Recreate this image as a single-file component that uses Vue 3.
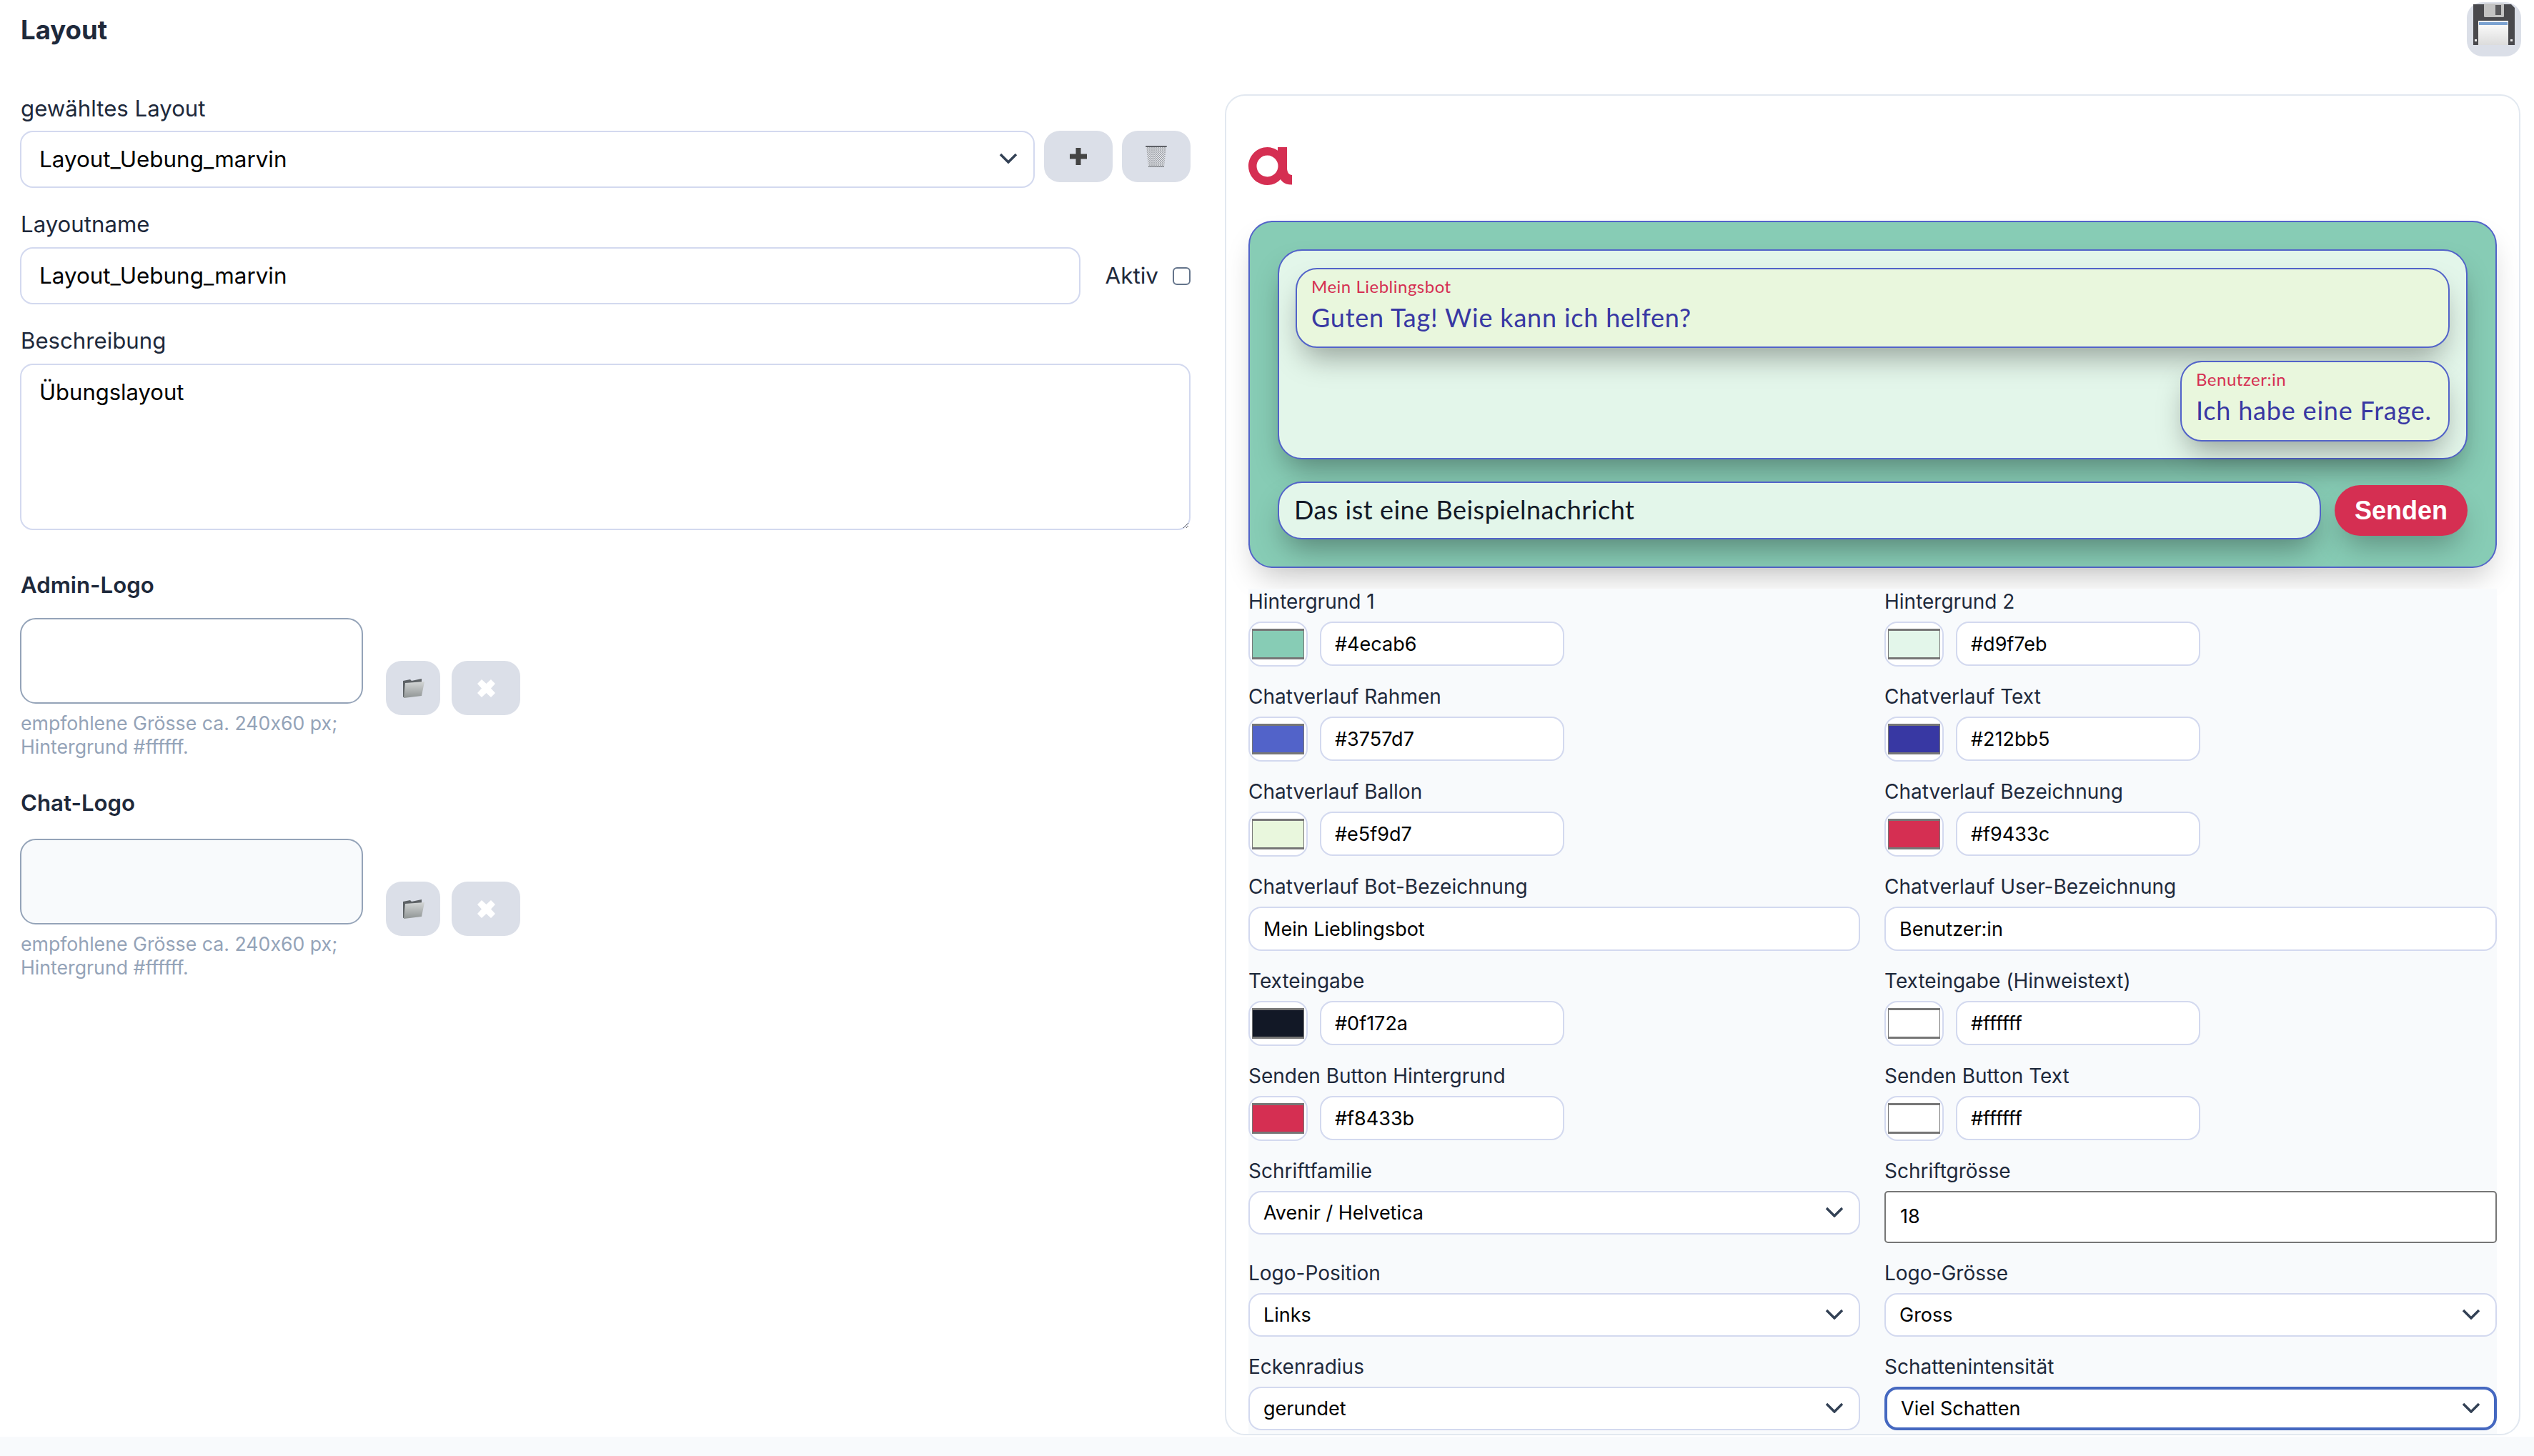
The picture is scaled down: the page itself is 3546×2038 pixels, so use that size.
<script setup>
const leftLogos = [
  { name: 'Admin-Logo', cls: 'admin-logo' },
  { name: 'Chat-Logo', cls: 'chat-logo' },
];
const rows = [
  { type: 'color', label: 'Hintergrund 1', value: '#4ecab6', color: '#87ccb5' },
  { type: 'color', label: 'Hintergrund 2', value: '#d9f7eb', color: '#e3f6ea' },
  { type: 'color', label: 'Chatverlauf Rahmen', value: '#3757d7', color: '#5263c9' },
  { type: 'color', label: 'Chatverlauf Text', value: '#212bb5', color: '#3838a3' },
  { type: 'color', label: 'Chatverlauf Ballon', value: '#e5f9d7', color: '#e9f7dd' },
  { type: 'color', label: 'Chatverlauf Bezeichnung', value: '#f9433c', color: '#d52f52' },
  { type: 'text', label: 'Chatverlauf Bot-Bezeichnung', value: 'Mein Lieblingsbot' },
  { type: 'text', label: 'Chatverlauf User-Bezeichnung', value: 'Benutzer:in' },
  { type: 'color', label: 'Texteingabe', value: '#0f172a', color: '#121826' },
  { type: 'color', label: 'Texteingabe (Hinweistext)', value: '#ffffff', color: '#ffffff' },
  { type: 'color', label: 'Senden Button Hintergrund', value: '#f8433b', color: '#d52f52' },
  { type: 'color', label: 'Senden Button Text', value: '#ffffff', color: '#ffffff' },
  { type: 'select', label: 'Schriftfamilie', value: 'Avenir / Helvetica' },
  { type: 'number', label: 'Schriftgrösse', value: '18' },
  { type: 'select', label: 'Logo-Position', value: 'Links' },
  { type: 'select', label: 'Logo-Grösse', value: 'Gross' },
  { type: 'select', label: 'Eckenradius', value: 'gerundet' },
  { type: 'select', label: 'Schattenintensität', value: 'Viel Schatten', focus: true },
];
</script>

<template>
  <div class="page">
    <div class="sheet">
      <header class="header">
        <h1 class="title">Layout</h1>
        <button class="btn save" aria-label="Speichern">
          <svg width="58" height="58" viewBox="0 0 58 58">
            <defs>
              <linearGradient id="lab" x1="0" y1="0" x2="0" y2="1">
                <stop offset="0" stop-color="#ffffff" />
                <stop offset="1" stop-color="#dcdcdc" />
              </linearGradient>
            </defs>
            <path d="M0 1h53l5 5v52H0z" fill="#49494d" />
            <rect x="15" y="0" width="28" height="19" rx="1.5" fill="#c2c2c2" />
            <rect x="31" y="2" width="8" height="14" fill="#59595c" />
            <rect x="7" y="24" width="42" height="34" fill="url(#lab)" />
            <rect x="8" y="26" width="40" height="4" fill="#7ba2d1" />
            <rect x="2" y="50" width="3" height="3" fill="#eee" />
            <rect x="52" y="50" width="3" height="3" fill="#eee" />
          </svg>
        </button>
      </header>

      <main class="columns">
        <section class="left">
          <label class="label first">gewähltes Layout</label>
          <div class="layout-row">
            <div class="select-wrap grow">
              <select class="field big">
                <option>Layout_Uebung_marvin</option>
              </select>
              <svg class="chev" width="26" height="15" viewBox="0 0 26 15"><path d="M2 2l11 11L24 2" /></svg>
            </div>
            <button class="btn action" aria-label="Neu">
              <svg width="24" height="24" viewBox="0 0 24 24"><path d="M8.500 0h7v8.500H24v7h-8.500V24h-7v-8.500H0v-7h8.500z" fill="#444" /></svg>
            </button>
            <button class="btn action" aria-label="Löschen">
              <svg width="30" height="30" viewBox="0 0 30 30">
                <defs>
                  <pattern id="mesh" width="3" height="3" patternUnits="userSpaceOnUse">
                    <path d="M0 0l3 3M3 0L0 3" stroke="#7d8187" stroke-width=".55" />
                  </pattern>
                </defs>
                <path d="M1 2h28l-3 27H4z" fill="#e2e4e8" />
                <path d="M1 2h28l-3 27H4z" fill="url(#mesh)" />
                <rect x="0" y="0" width="30" height="2" rx="1" fill="#5d6066" />
                <rect x="4" y="28.500" width="22" height="1.500" fill="#8a8d93" />
              </svg>
            </button>
          </div>

          <label class="label">Layoutname</label>
          <div class="name-row">
            <input class="field big grow" type="text" value="Layout_Uebung_marvin" />
            <span class="aktiv">Aktiv</span>
            <span class="check"></span>
          </div>

          <label class="label">Beschreibung</label>
          <textarea class="field area">Übungslayout</textarea>

          <div v-for="l in leftLogos" :key="l.name" class="logo-block" :class="l.cls">
            <h2 class="logo-title">{{ l.name }}</h2>
            <div class="logo-row">
              <div class="logo-main">
                <div class="logo-box"></div>
                <p class="hint">empfohlene Grösse ca. 240x60 px;<br />Hintergrund #ffffff.</p>
              </div>
              <button class="btn small" aria-label="Öffnen">
                <svg width="31" height="29" viewBox="0 0 31 29">
                  <defs>
                    <linearGradient id="fold" x1="0" y1="0" x2="0" y2="1">
                      <stop offset="0" stop-color="#d3d6d6" />
                      <stop offset="1" stop-color="#8f9494" />
                    </linearGradient>
                  </defs>
                  <path d="M1 4l10-2 2 2 14-3v18L1 27z" fill="#5d6266" />
                  <path d="M4 7l27-2-4 20L2 28z" fill="url(#fold)" />
                </svg>
              </button>
              <button class="btn action x" aria-label="Entfernen">
                <svg width="25" height="25" viewBox="0 0 25 25"><path d="M6 0l6.500 6L19 0l6 6-6 6.500 6 6.500-6 6-6.500-6L6 25l-6-6 6-6.500L0 6z" fill="#fff" /></svg>
              </button>
            </div>
          </div>
        </section>

        <section class="card">
          <div class="brand">
            <svg width="61" height="53" viewBox="0 0 61 53">
              <path fill-rule="evenodd" fill="#d52f52" d="M26.500 0C32 0 37 1.700 41 4.700V0h13v29c0 6.500 3 10 7 10v13.500c-8 0-13-2.500-16-7.500-4.500 5-11 8-18.500 8C12 53 0 41 0 26.500S12 0 26.500 0zm0 11.500a15 15 0 1 0 0 30 15 15 0 0 0 0-30z" />
            </svg>
          </div>

          <div class="preview">
            <div class="chat">
              <div class="balloon bot">
                <div class="who">Mein Lieblingsbot</div>
                <div class="say">Guten Tag! Wie kann ich helfen?</div>
              </div>
              <div class="balloon user">
                <div class="who">Benutzer:in</div>
                <div class="say">Ich habe eine Frage.</div>
              </div>
            </div>
            <div class="entry">
              <div class="entry-field">Das ist eine Beispielnachricht</div>
              <button class="send">Senden</button>
            </div>
          </div>

          <div class="form">
            <div v-for="r in rows" :key="r.label" class="cell">
              <label class="flabel">{{ r.label }}</label>
              <div v-if="r.type === 'color'" class="color-row">
                <span class="swatch"><span class="chip" :style="{ background: r.color }"></span></span>
                <input class="field small-field hex" type="text" :value="r.value" />
              </div>
              <input v-else-if="r.type === 'text'" class="field small-field" type="text" :value="r.value" />
              <input v-else-if="r.type === 'number'" class="number" type="number" :value="r.value" />
              <div v-else class="select-wrap">
                <select class="field small-field sel" :class="{ focus: r.focus }">
                  <option>{{ r.value }}</option>
                </select>
                <svg class="chev small-chev" width="26" height="15" viewBox="0 0 26 15"><path d="M2 2l11 11L24 2" /></svg>
              </div>
            </div>
          </div>
        </section>
      </main>
    </div>
  </div>
</template>

<style>
html, body { margin: 0; background: #f8fafc; }
</style>

<style scoped>
* { box-sizing: border-box; font-feature-settings: "calt" 0; }
.page {
  width: 3546px;
  height: 2038px;
  background: #f8fafc;
  font-family: Inter, "Liberation Sans", sans-serif;
  color: #1e293b;
  overflow: hidden;
}
.sheet { background: #fff; height: 2011px; }
.header {
  height: 132px;
  display: flex;
  justify-content: space-between;
  align-items: flex-start;
  padding: 0 18px 0 29px;
}
.title { margin: 24px 0 0; font-size: 36.500px; line-height: 36px; font-weight: 700; color: #1e293b; }
.btn {
  border: 0;
  padding: 0;
  background: #dbdfe8;
  border-radius: 22px;
  display: flex;
  align-items: center;
  justify-content: center;
}
.save { width: 76px; height: 76px; margin-top: 3px; padding-bottom: 14px; }
.columns { display: flex; padding-left: 28px; gap: 48px; }
.left { width: 1638px; flex: none; }
.label { display: block; font-size: 31.200px; line-height: 36px; margin: 33px 0 14px 1px; color: #1e293b; }
.label.first { margin-top: 2px; margin-bottom: 13px; }
.field {
  display: block;
  border: 2.500px solid #d3d9ef;
  border-radius: 18px;
  background: #fff;
  color: #000;
  font-family: inherit;
  outline: none;
  appearance: none;
  width: 100%;
}
.big { height: 80px; padding: 0 25px; font-size: 31.400px; }
.grow { flex: 1; min-width: 0; }
.layout-row { display: flex; gap: 13px; align-items: flex-start; }
.select-wrap { position: relative; }
.chev { position: absolute; right: 24px; top: 31px; pointer-events: none; }
.chev path { fill: none; stroke: #334155; stroke-width: 3.500; }
.small-chev { right: 23px; top: 22px; }
.action { width: 96px; height: 72px; flex: none; border-radius: 22px; }
.name-row { display: flex; align-items: center; }
.aktiv { margin-left: 35px; font-size: 31.400px; }
.check {
  width: 25px;
  height: 25px;
  margin-left: 20px;
  border: 2.500px solid #64748b;
  border-radius: 6px;
  background: #fff;
}
.area {
  height: 233px;
  padding: 20px 25px;
  font-size: 31px;
  line-height: 36px;
  resize: vertical;
  appearance: auto;
}
.logo-block { margin-top: 59px; }
.chat-logo { margin-top: 45px; }
.logo-title { margin: 0 0 28px 1px; font-size: 31.200px; line-height: 36px; font-weight: 600; color: #1e293b; }
.chat-logo .logo-title { margin-bottom: 32px; }
.logo-row { display: flex; align-items: center; gap: 16px; }
.logo-main { width: 480px; margin-right: 16px; }
.logo-box { height: 120px; border: 2.500px solid #94a3b8; border-radius: 22px; background: #fff; }
.chat-logo .logo-box { background: #f8fafc; }
.hint { margin: 11px 0 0 1px; font-size: 26.700px; line-height: 32.500px; color: #94a3b8; }
.small { width: 76px; height: 76px; flex: none; }
.x { height: 76px; }

.card {
  width: 1813px;
  flex: none;
  height: 1877px;
  border: 2px solid #e2e8f0;
  border-radius: 28px;
  background: #fff;
  padding: 0 31px;
  overflow: hidden;
}
.brand { height: 175px; padding-top: 72px; }
.brand svg { display: block; }
.preview {
  height: 486px;
  padding: 38px 39px 0;
  background: #87ccb5;
  border: 2.500px solid #5263c9;
  border-radius: 34px;
  box-shadow: 0 22px 40px -10px rgba(0, 0, 0, .22);
  font-family: Lato, "Liberation Sans", sans-serif;
}
.chat {
  height: 294px;
  padding: 24px 23px;
  background: #e3f6ea;
  border: 2.500px solid #5263c9;
  border-radius: 34px;
  box-shadow: 0 22px 40px -10px rgba(0, 0, 0, .35);
  display: flex;
  flex-direction: column;
  align-items: flex-end;
  gap: 18px;
}
.balloon {
  height: 112px;
  padding: 8px 20px;
  background: #e9f7dd;
  border: 2.500px solid #5263c9;
  border-radius: 30px;
  box-shadow: 0 22px 40px -10px rgba(0, 0, 0, .35);
  flex: none;
}
.bot { width: 100%; }
.user { width: 377px; height: 113px; }
.who { font-size: 24px; line-height: 32px; letter-spacing: .5px; color: #d52f52; }
.say { font-size: 36px; line-height: 54px; letter-spacing: .8px; color: #3838a3; white-space: nowrap; }
.entry { display: flex; align-items: center; gap: 19px; margin-top: 31px; }
.entry-field {
  flex: 1;
  height: 81px;
  padding: 0 0 4px 21px;
  display: flex;
  align-items: center;
  font-size: 36px;
  letter-spacing: .5px;
  color: #121826;
  background: #e3f6ea;
  border: 2.500px solid #5263c9;
  border-radius: 34px;
  box-shadow: 0 22px 40px -10px rgba(0, 0, 0, .35);
}
.send {
  width: 186px;
  height: 71px;
  border: 0;
  border-radius: 36px;
  background: #d52f52;
  color: #fff;
  font: 700 36px "Liberation Sans", sans-serif;
  box-shadow: 0 22px 40px -10px rgba(0, 0, 0, .3);
}
.form {
  margin-top: 29px;
  background: #f8fafc;
  display: grid;
  grid-template-columns: 856px 857px;
  column-gap: 34px;
  row-gap: 24px;
  height: 1200px;
  align-content: start;
}
.cell { min-width: 0; }
.flabel { display: block; font-size: 28px; line-height: 36px; margin-bottom: 10px; color: #1e293b; }
.small-field { height: 62px; padding: 0 19px; font-size: 27px; }
.sel { height: 61px; }
.focus { border: 4px solid #4568c0; }
.color-row { display: flex; gap: 17px; }
.swatch {
  width: 83px;
  height: 63px;
  flex: none;
  border: 2.500px solid #d3d9ef;
  border-radius: 18px;
  background: #fff;
  padding: 8px 3px;
  display: flex;
}
.chip { flex: 1; border: 2px solid #767676; border-top-width: 3px; border-bottom-width: 3px; border-left-width: 1px; border-right-width: 1px; }
.hex { width: 342px; }
.number {
  display: block;
  width: 100%;
  height: 73px;
  border: 2px solid #767676;
  border-radius: 5px;
  background: #fff;
  padding: 0 20px 2px;
  font: 27px Inter, "Liberation Sans", sans-serif;
  color: #000;
  outline: none;
}
</style>
